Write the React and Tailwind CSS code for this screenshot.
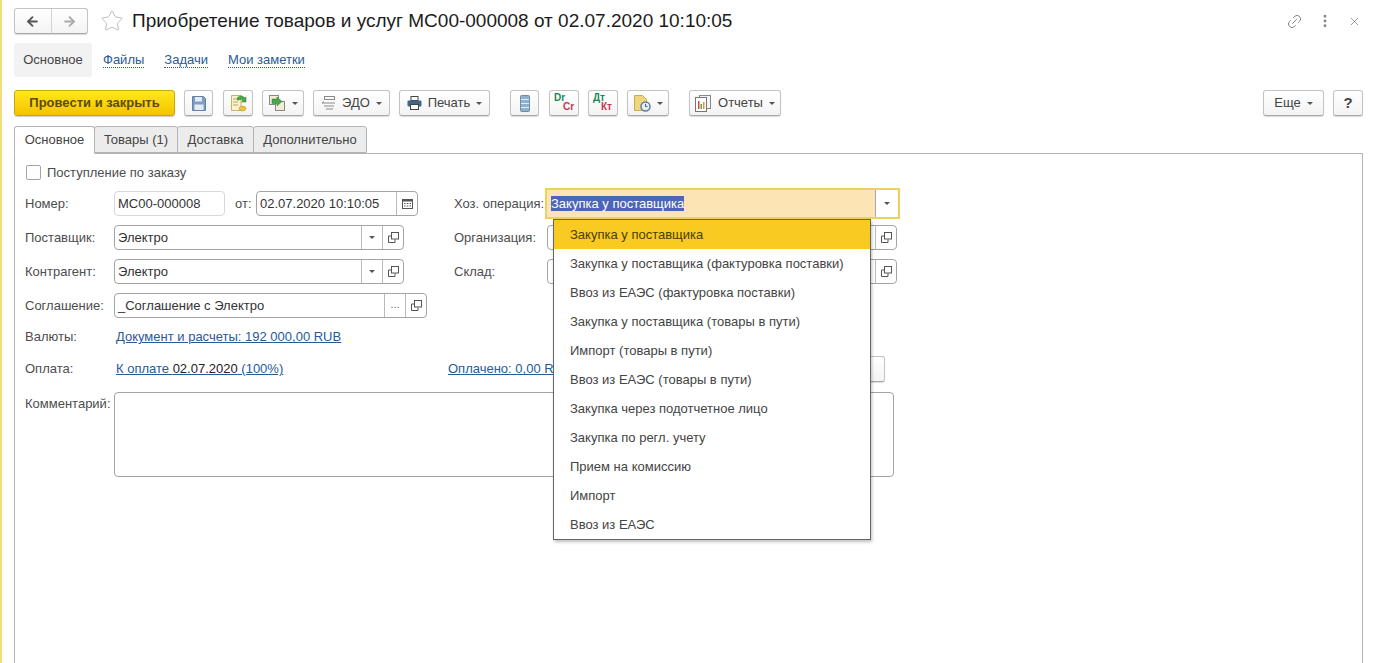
import { Star, Link2, EllipsisVertical, X, ArrowLeft, ArrowRight } from 'lucide-react';

const MENU_ITEMS = [
  'Закупка у поставщика',
  'Закупка у поставщика (фактуровка поставки)',
  'Ввоз из ЕАЭС (фактуровка поставки)',
  'Закупка у поставщика (товары в пути)',
  'Импорт (товары в пути)',
  'Ввоз из ЕАЭС (товары в пути)',
  'Закупка через подотчетное лицо',
  'Закупка по регл. учету',
  'Прием на комиссию',
  'Импорт',
  'Ввоз из ЕАЭС',
];

function Caret({ className = 'ml-[6px]' }) {
  return <span className={`inline-block w-0 h-0 border-x-[3px] border-x-transparent border-t-[3px] border-t-[#555] ${className}`} />;
}

function Btn({ className = '', children }) {
  return (
    <div className={`h-[26px] shrink-0 flex items-center justify-center rounded-[3px] border border-[#c4c4c4] border-b-[#a8a8a8] bg-gradient-to-b from-white to-[#f3f3f3] shadow-[0_1px_1px_rgba(0,0,0,0.15)] text-[13px] text-[#444] ${className}`}>
      {children}
    </div>
  );
}

function CopyIcon() {
  return (
    <svg width="11" height="11" viewBox="0 0 11 11" fill="none" stroke="#555" strokeWidth="1">
      <rect x="3.5" y="0.5" width="7" height="6.5" fill="#fff" />
      <path d="M3 4H0.5V10.5H7V7.5" />
    </svg>
  );
}

function Field({ className = '', text, noCaret, dots, calendar, light }) {
  return (
    <div className={`h-[25px] flex items-stretch rounded-[4px] border bg-white text-[13px] text-[#333] shrink-0 ${light ? 'border-[#d8d8d8]' : 'border-[#a4a4a4]'} ${className}`}>
      <div className="flex-1 flex items-center px-[3px] overflow-hidden whitespace-nowrap">{text}</div>
      {calendar && (
        <div className="w-[21px] border-l border-[#bbb] flex items-center justify-center">
          <svg width="11" height="11" viewBox="0 0 11 11">
            <rect x="0.5" y="1.5" width="10" height="9" fill="none" stroke="#555" />
            <rect x="0.5" y="1" width="10" height="2.5" fill="#555" />
            <path d="M2 5h1.5v1H2zM4.8 5h1.5v1H4.8zM7.5 5H9v1H7.500zM2 7.500h1.500v1H2zM4.800 7.500h1.500v1H4.800zM7.500 7.500H9v1H7.500z" fill="#555" />
          </svg>
        </div>
      )}
      {!noCaret && !calendar && !dots && (
        <div className="w-[21px] border-l border-[#bbb] flex items-center justify-center"><Caret className="" /></div>
      )}
      {dots && <div className="w-[21px] border-l border-[#bbb] flex items-center justify-center text-[11px] text-[#666] pb-[2px]">...</div>}
      {!calendar && !(noCaret && light) && (
        <div className="w-[21px] border-l border-[#bbb] flex items-center justify-center"><CopyIcon /></div>
      )}
    </div>
  );
}

function Label({ className = 'w-[89px]', children }) {
  return <div className={`text-[13px] text-[#4d4d4d] whitespace-nowrap shrink-0 ${className}`}>{children}</div>;
}

function Row({ className = 'mt-[9px]', children }) {
  return <div className={`flex items-center h-[25px] ${className}`}>{children}</div>;
}

function Tab({ active, className, children }) {
  return (
    <div className={`h-[27px] flex items-center justify-center rounded-t-[3px] border border-[#b4b4b4] text-[13px] text-[#444] ${active ? 'bg-white border-b-white relative z-10 h-[28px] -mb-px' : 'bg-[#ececec]'} ${className}`}>
      {children}
    </div>
  );
}

export default function App() {
  return (
    <div className="relative w-[1382px] h-[663px] overflow-hidden bg-white font-['Liberation_Sans',Arial,sans-serif] border-l-2 border-[#f3dc7e]">
      {/* Header */}
      <div className="flex items-center h-[26px] mt-2 ml-[12px] pt-0">
        <div className="flex w-[74px] h-[26px] rounded-[3px] border border-[#c4c4c4] border-b-[#a8a8a8] bg-gradient-to-b from-white to-[#f3f3f3] shadow-[0_1px_1px_rgba(0,0,0,0.15)]">
          <div className="flex-1 flex items-center justify-center border-r border-[#d4d4d4]"><ArrowLeft size={15} strokeWidth={3} color="#555" /></div>
          <div className="flex-1 flex items-center justify-center"><ArrowRight size={15} strokeWidth={3} color="#aaa" /></div>
        </div>
        <Star size={24} strokeWidth={1} color="#bdbdbd" className="ml-[12px]" />
        <div className="ml-[8px] text-[19px] text-[#1c1c1c] whitespace-nowrap">Приобретение товаров и услуг МС00-000008 от 02.07.2020 10:10:05</div>
        <div className="ml-auto flex items-center mr-[21px]">
          <Link2 size={17} strokeWidth={1.2} color="#777" className="-rotate-45" />
          <EllipsisVertical size={16} strokeWidth={2.4} color="#888" className="ml-[14px]" />
          <X size={13} strokeWidth={1.2} color="#666" className="ml-[15px]" />
        </div>
      </div>

      {/* Section links */}
      <div className="flex items-center h-[34px] mt-[9px] ml-[12px] text-[13px]">
        <div className="w-[78px] h-full flex items-center justify-center rounded-[3px] bg-[#f2f2f2] text-[#444]">Основное</div>
        <span className="ml-[11px] text-[#2a5a94] border-b border-dotted border-[#2a5a94] leading-[15px]">Файлы</span>
        <span className="ml-[20px] text-[#2a5a94] border-b border-dotted border-[#2a5a94] leading-[15px]">Задачи</span>
        <span className="ml-[20px] text-[#2a5a94] border-b border-dotted border-[#2a5a94] leading-[15px]">Мои заметки</span>
      </div>

      {/* Toolbar */}
      <div className="flex items-center h-[26px] mt-[13px] ml-[12px] mr-[19px]">
        <div className="w-[161px] h-[26px] flex items-center justify-center rounded-[3px] border border-[#c9a80c] bg-gradient-to-b from-[#ffe81a] to-[#f4c300] shadow-[0_1px_1px_rgba(0,0,0,0.2)] text-[13px] font-bold text-[#5c4b00]">Провести и закрыть</div>
        <Btn className="w-[29px] ml-[9px]">
          <svg width="14" height="15" viewBox="0 0 14 15">
            <path d="M0.500 0.500H11.500L13.500 2.500V14.500H0.500Z" fill="#7f9fc0" stroke="#5f83a6" />
            <rect x="3" y="1" width="7" height="4.500" fill="#e4ebf2" />
            <rect x="2.500" y="8.500" width="9" height="5.500" fill="#e4ebf2" />
          </svg>
        </Btn>
        <Btn className="w-[30px] ml-[10px]">
          <svg width="17" height="18" viewBox="0 0 17 18">
            <path d="M1.500 1.500H11V16.500H1.500Z" fill="#fbf3cf" stroke="#c9b36a" />
            <path d="M3 5h6M3 8h5M3 11h5" stroke="#b9a664" />
            <path d="M7 4.500 C8 1.500 13 1 14.500 4 L16 3 V8 H11.500 L13 6.800 C12 5 9 5 8 6.500Z" fill="#4aa845" stroke="#2f7f2f" strokeWidth="0.5" />
            <ellipse cx="12.500" cy="14.500" rx="3.500" ry="2.500" fill="#e9c23f" stroke="#b8922a" strokeWidth="0.5" />
          </svg>
        </Btn>
        <Btn className="w-[42px] ml-[9px]">
          <svg width="17" height="16" viewBox="0 0 17 16">
            <rect x="0.500" y="0.500" width="9" height="9" fill="#f1ecd8" stroke="#8a8a7a" />
            <rect x="6.500" y="6.500" width="9" height="9" fill="#f1ecd8" stroke="#8a8a7a" />
            <path d="M3 4H8V2L13 6.500L8 11V8.500H3Z" fill="#46a84a" stroke="#2f7f2f" strokeWidth="0.5" />
          </svg>
          <Caret />
        </Btn>
        <Btn className="w-[77px] ml-[9px]">
          <svg width="15" height="14" viewBox="0 0 15 14" fill="none" stroke="#8a8a8a">
            <rect x="3.500" y="0.500" width="10" height="3" />
            <path d="M1 7H14M1 7L3 5.500M3 10H13M5 13H12" />
          </svg>
          <span className="ml-[6px]">ЭДО</span>
          <Caret />
        </Btn>
        <Btn className="w-[91px] ml-[9px]">
          <svg width="15" height="14" viewBox="0 0 15 14">
            <rect x="4" y="0.500" width="7" height="4" fill="#fff" stroke="#444" />
            <rect x="0.500" y="4.500" width="14" height="6" rx="1" fill="#3f6788" />
            <rect x="3.500" y="8.500" width="8" height="5" fill="#fff" stroke="#444" />
          </svg>
          <span className="ml-[6px]">Печать</span>
          <Caret />
        </Btn>
        <Btn className="w-[29px] ml-[20px]">
          <svg width="10" height="17" viewBox="0 0 10 17">
            <rect x="0.500" y="0.500" width="9" height="16" rx="1" fill="#8fb0cc" stroke="#6b8eaa" />
            <path d="M1 4.500h8M1 8.500h8M1 12.500h8" stroke="#e6eef5" />
          </svg>
        </Btn>
        <Btn className="w-[30px] ml-[10px]">
          <span className="relative block w-[24px] h-[20px] text-[10px] font-bold leading-[10px]">
            <span className="absolute left-[2px] top-0 text-[#18875a]">Dr</span>
            <span className="absolute left-[11px] top-[9px] text-[#c5374f]">Cr</span>
          </span>
        </Btn>
        <Btn className="w-[30px] ml-[9px]">
          <span className="relative block w-[24px] h-[20px] text-[10px] font-bold leading-[10px]">
            <span className="absolute left-[2px] top-0 text-[#18875a]">Дт</span>
            <span className="absolute left-[10px] top-[9px] text-[#c5374f]">Кт</span>
          </span>
        </Btn>
        <Btn className="w-[42px] ml-[9px]">
          <svg width="17" height="17" viewBox="0 0 17 17">
            <path d="M0.500 0.500H8.500L12.500 4.500V15.500H0.500Z" fill="#f0d67f" stroke="#c8ac55" />
            <circle cx="11.500" cy="11.500" r="4.500" fill="#e8edf3" stroke="#5f7f9f" strokeWidth="1.500" />
            <path d="M11.500 9V11.500H13.500" stroke="#44627f" fill="none" />
          </svg>
          <Caret />
        </Btn>
        <Btn className="w-[92px] ml-[20px]">
          <svg width="16" height="17" viewBox="0 0 16 17">
            <rect x="4.500" y="0.500" width="11" height="13" fill="#f4f4f4" stroke="#888" />
            <rect x="0.500" y="2.500" width="11" height="14" fill="#fff" stroke="#777" />
            <path d="M3 6v8h1.500V6z" fill="#c5533a" />
            <path d="M5.500 9v5H7V9z" fill="#6ba04a" />
            <path d="M8 7v7h1.500V7z" fill="#c9a23a" />
          </svg>
          <span className="ml-[7px]">Отчеты</span>
          <Caret />
        </Btn>
        <Btn className="w-[61px] ml-auto">Еще<Caret /></Btn>
        <Btn className="w-[30px] ml-[9px] text-[15px] font-bold text-[#333]">?</Btn>
      </div>

      {/* Tabs */}
      <div className="flex items-end h-[27px] mt-[10px] ml-[12px]">
        <Tab active className="w-[81px]">Основное</Tab>
        <Tab className="w-[84px] -ml-px">Товары (1)</Tab>
        <Tab className="w-[77px] -ml-px">Доставка</Tab>
        <Tab className="w-[114px] -ml-px">Дополнительно</Tab>
      </div>

      {/* Form panel */}
      <div className="ml-[12px] w-[1349px] h-[520px] border border-[#b4b4b4] pl-[10px] pt-[11px]">
        <div className="flex items-center h-[15px] ml-px">
          <div className="w-[15px] h-[15px] rounded-[2px] border border-[#a4a4a4] bg-white" />
          <span className="ml-[6px] text-[13px] text-[#4d4d4d]">Поступление по заказу</span>
        </div>

        <Row className="mt-[11px]">
          <div className="flex items-center w-[429px] shrink-0">
            <Label>Номер:</Label>
            <Field className="w-[111px]" text="МС00-000008" noCaret light />
            <Label className="ml-[10px] w-[21px]">от:</Label>
            <Field className="w-[162px]" text="02.07.2020 10:10:05" calendar />
          </div>
          <Label className="w-[91px]">Хоз. операция:</Label>
          <div className="w-[355px] h-[31px] shrink-0 flex border-2 border-[#ecd25c] bg-white">
            <div className="flex-1 bg-[#fde4b4] flex items-center pl-[4px] border-r border-[#aaa] text-[13px]">
              <span className="bg-[#4a66b4] text-white leading-[15px]">Закупка у поставщика</span>
            </div>
            <div className="w-[22px] flex items-center justify-center"><Caret className="" /></div>
          </div>
        </Row>

        <Row>
          <div className="flex items-center w-[429px] shrink-0">
            <Label>Поставщик:</Label>
            <Field className="w-[290px]" text="Электро" />
          </div>
          <Label className="w-[93px]">Организация:</Label>
          <Field className="w-[350px]" text="" noCaret />
        </Row>

        <Row>
          <div className="flex items-center w-[429px] shrink-0">
            <Label>Контрагент:</Label>
            <Field className="w-[290px]" text="Электро" />
          </div>
          <Label className="w-[93px]">Склад:</Label>
          <Field className="w-[350px]" text="" noCaret />
        </Row>

        <Row>
          <Label>Соглашение:</Label>
          <Field className="w-[313px]" text="_Соглашение с Электро" dots />
        </Row>

        <div className="flex items-center h-[20px] mt-[9px]">
          <Label>Валюты:</Label>
          <span className="ml-[2px] text-[13px] text-[#2a5a94] underline">Документ и расчеты: 192 000,00 RUB</span>
        </div>

        <div className="flex items-center h-[20px] mt-[12px]">
          <Label>Оплата:</Label>
          <span className="ml-[2px] w-[332px] shrink-0 text-[13px] text-[#2a5a94] underline">К оплате <span className="text-[#222]">02.07.2020</span> (100%)</span>
          <span className="w-[412px] shrink-0 text-[13px] text-[#2a5a94] underline">Оплачено: 0,00 RUB</span>
          <Btn className="w-[25px]" />
        </div>

        <div className="flex items-start mt-[13px]">
          <Label className="w-[89px] mt-[2px]">Комментарий:</Label>
          <div className="w-[780px] h-[85px] rounded-[4px] border border-[#a4a4a4] bg-white" />
        </div>
      </div>

      {/* Dropdown list for Хоз. операция */}
      <div className="absolute left-[551px] top-[219px] w-[318px] border border-[#666] bg-white shadow-[1px_2px_3px_rgba(0,0,0,0.25)] z-20">
        {MENU_ITEMS.map((item, i) => (
          <div key={item} className={`h-[29px] flex items-center pl-[16px] text-[13px] ${i === 0 ? 'bg-[#f9cb22] text-[#4a3c00]' : 'text-[#444]'}`}>{item}</div>
        ))}
      </div>
    </div>
  );
}
